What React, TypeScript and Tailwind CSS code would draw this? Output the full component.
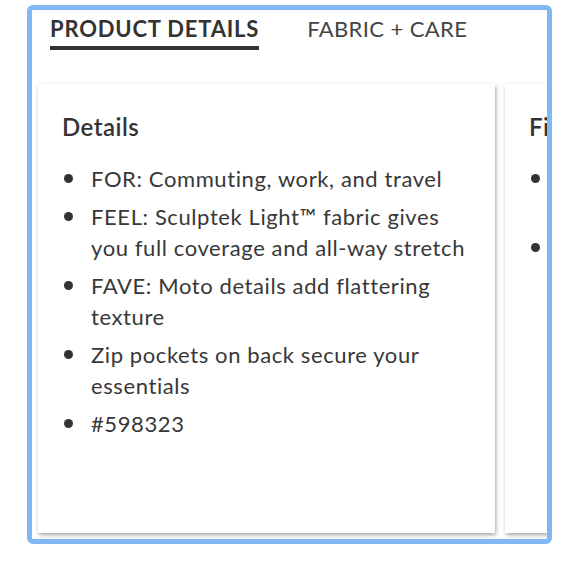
import React from "react";

const details = [
  "FOR: Commuting, work, and travel",
  "FEEL: Sculptek Light™ fabric gives you full coverage and all-way stretch",
  "FAVE: Moto details add flattering texture",
  "Zip pockets on back secure your essentials",
  "#598323",
];

const fit = [
  "Designed for: Fits close to the body from waist to ankle",
  "Hits at ankle, 7/8 length",
];

function Card({ title, items }: { title: string; items: string[] }) {
  return (
    <div className="w-[457px] h-[449px] shrink-0 bg-white shadow-[1px_2px_4px_rgba(0,0,0,0.35)] pl-[24px] pr-[24px] pt-[26px]">
      <h2 className="text-[24px] leading-[34px] font-semibold tracking-[0.5px] text-[#333]">{title}</h2>
      <ul className="mt-[19px] flex flex-col gap-[7px]">
        {items.map((t) => (
          <li key={t} className="flex text-[22px] leading-[31px] tracking-[0.6px] text-[#383838]">
            <span className="w-[29px] shrink-0 flex items-center h-[31px]">
              <span className="ml-[2px] w-[9px] h-[9px] rounded-full bg-[#333]" />
            </span>
            <span>{t}</span>
          </li>
        ))}
      </ul>
    </div>
  );
}

export default function App() {
  return (
    <div
      className="w-[580px] h-[580px] bg-white pl-[27px] pt-[5px]"
      style={{ fontFamily: "Lato, 'Noto Sans', sans-serif" }}
    >
      <div className="w-[525px] h-[539px] border-[5px] border-[#80b8f3] rounded-[6px] overflow-hidden flex flex-col">
        <div className="flex pl-[18px] pt-[4px] gap-[48px]">
          <div className="text-[22px] leading-[30px] font-bold tracking-[0.8px] text-[#333] border-b-[4px] border-[#333] pb-[2px]">
            PRODUCT DETAILS
          </div>
          <div className="text-[22px] leading-[30px] tracking-[0.4px] text-[#444]">FABRIC + CARE</div>
        </div>
        <div className="flex gap-[10px] pl-[6px] mt-[34px]">
          <Card title="Details" items={details} />
          <Card title="Fit" items={fit} />
        </div>
      </div>
    </div>
  );
}
